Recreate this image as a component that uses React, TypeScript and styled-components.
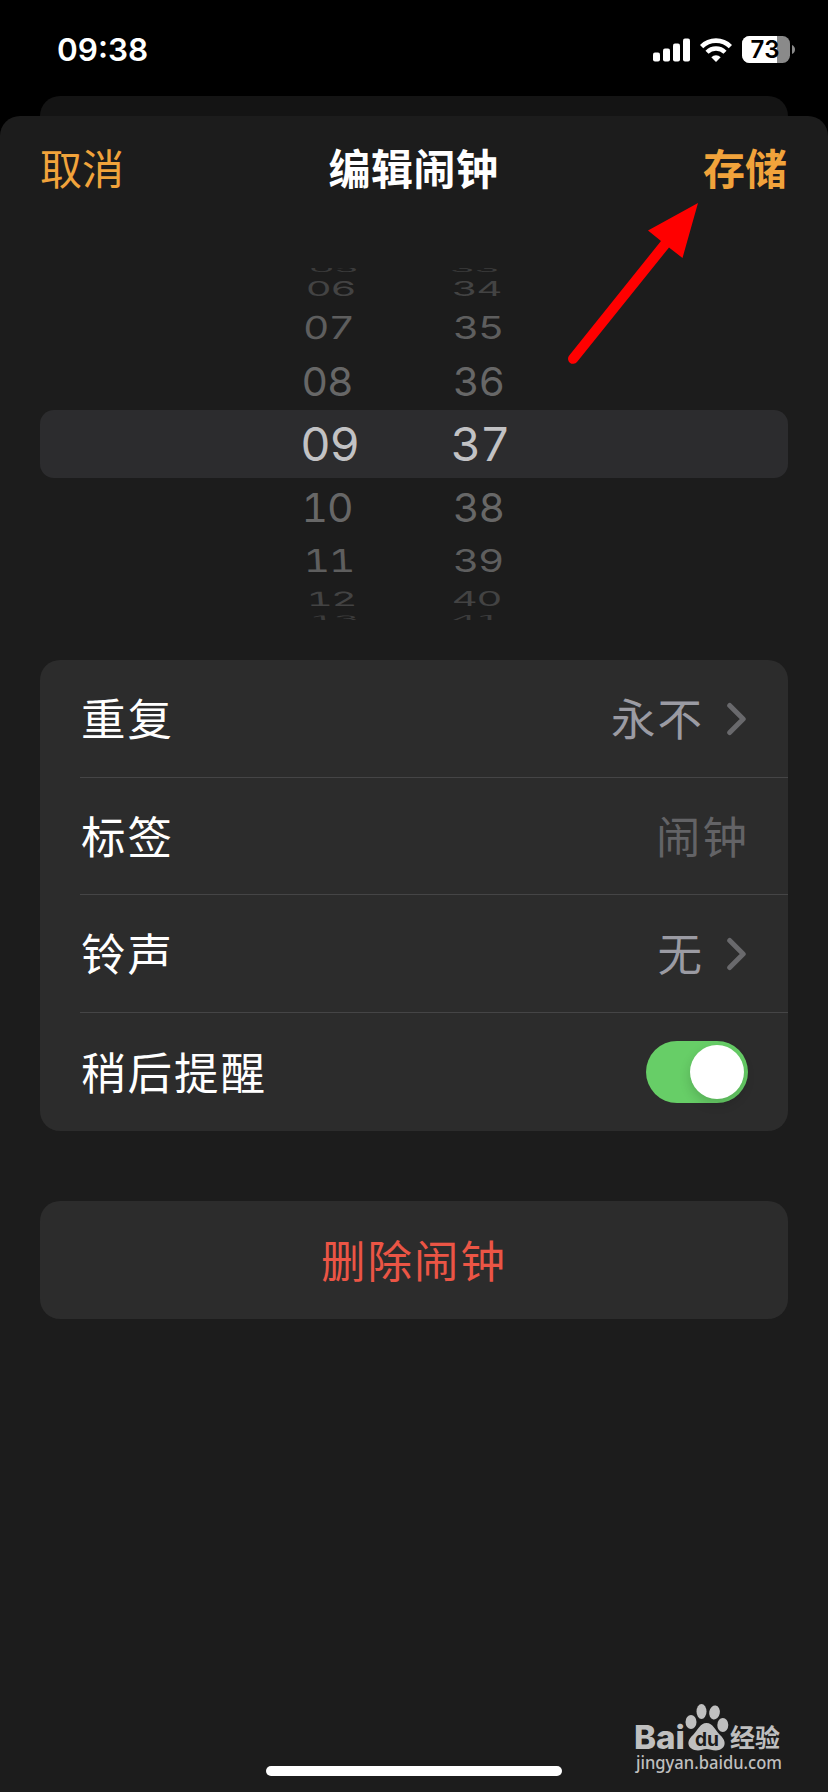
import React from "react";
import styled, { createGlobalStyle } from "styled-components";

const GlobalStyle = createGlobalStyle`
  * { box-sizing: border-box; }
  body { margin: 0; background: #000; font-family: Inter, "Noto Sans CJK SC", sans-serif; }
  button { border: 0; padding: 0; margin: 0; background: none; font: inherit; color: inherit; }
`;

const Screen = styled.div`
  position: relative;
  display: flex;
  flex-direction: column;
  width: 828px;
  height: 1792px;
  background: #000;
  color: #fff;
  overflow: hidden;
`;

const StatusBar = styled.header`
  display: flex;
  align-items: center;
  justify-content: space-between;
  height: 96px;
  padding: 3px 33px 0 57px;
`;

const Clock = styled.time`
  font-size: 31.5px;
  line-height: 40px;
  font-weight: 600;
`;

const StatusIcons = styled.div`
  display: flex;
  align-items: center;
  gap: 10px;
`;

const BackCard = styled.div`
  flex: none;
  height: 20px;
  margin: 0 40px;
  border-radius: 20px 20px 0 0;
  background: #141414;
`;

const Sheet = styled.main`
  flex: 1;
  display: flex;
  flex-direction: column;
  border-radius: 20px 20px 0 0;
  background: #1c1c1c;
`;

const NavBar = styled.nav`
  display: grid;
  grid-template-columns: 1fr auto 1fr;
  align-items: center;
  height: 102px;
  padding: 0 41px 0 40px;
  font-family: "Noto Sans CJK SC", sans-serif;
  font-size: 42px;
  line-height: 60px;
`;

const NavButton = styled.button<{ $strong?: boolean }>`
  justify-self: ${(p) => (p.$strong ? "end" : "start")};
  color: #f1a33b;
  font-weight: ${(p) => (p.$strong ? 700 : 400)};
`;

const Title = styled.h1`
  margin: 0;
  font-size: 42px;
  letter-spacing: 0.5px;
  font-weight: 700;
`;

const Picker = styled.section`
  display: grid;
  grid-template-rows: 8px 26px 51px 57px 68px 57px 51px 26px 8px;
  height: 352px;
  margin: 50px 40px 40px;
  overflow: hidden;
`;

const PickerRow = styled.div<{ $selected?: boolean }>`
  display: grid;
  grid-template-columns: 60px 60px;
  column-gap: 89px;
  justify-content: center;
  align-items: center;
  padding-right: 20px;
  border-radius: 14px;
  background: ${(p) => (p.$selected ? "#2c2c2e" : "transparent")};
`;

const Digits = styled.span<{ $size: number; $squash: number; $lean: number; $shift: number; $drop: number; $tone: string }>`
  display: block;
  justify-self: center;
  font-size: ${(p) => p.$size}px;
  line-height: 0;
  letter-spacing: -1.2px;
  font-variant-numeric: tabular-nums;
  color: ${(p) => p.$tone};
  transform: translate(${(p) => p.$shift}px, ${(p) => p.$drop}px) skewX(${(p) => p.$lean}deg) scaleY(${(p) => p.$squash});
`;

const Group = styled.section<{ $gap?: number }>`
  flex: none;
  margin: ${(p) => p.$gap ?? 0}px 40px 0;
  border-radius: 20px;
  background: #2c2c2c;
  overflow: hidden;
  font-family: "Noto Sans CJK SC", sans-serif;
  font-size: 44.5px;
  letter-spacing: 2px;
`;

const SettingRow = styled.div<{ $height: number }>`
  display: flex;
  align-items: center;
  height: ${(p) => p.$height}px;
  margin-left: 40px;
  padding-right: 40px;
  & + & { border-top: 1px solid #454546; }
`;

const Label = styled.span`
  flex: 1;
  line-height: 60px;
  padding: 0 0 3px 1px;
`;

const Value = styled.span<{ $placeholder?: boolean }>`
  line-height: 60px;
  padding-bottom: 3px;
  color: ${(p) => (p.$placeholder ? "#636366" : "#9b9ba3")};
  margin-right: ${(p) => (p.$placeholder ? -1 : 23)}px;
`;

const Switch = styled.button`
  display: flex;
  justify-content: flex-end;
  align-items: center;
  width: 102px;
  height: 62px;
  padding: 0 4px;
  border-radius: 31px;
  background: #67ce67;
`;

const Knob = styled.span`
  width: 54px;
  height: 54px;
  border-radius: 50%;
  background: #fff;
  box-shadow: 0 5px 12px rgba(0, 0, 0, 0.16);
`;

const DeleteButton = styled.button`
  display: block;
  width: 100%;
  height: 118px;
  padding-bottom: 3px;
  color: #eb5545;
  letter-spacing: 2px;
  line-height: 60px;
`;

const HomeIndicator = styled.div`
  width: 296px;
  height: 10px;
  margin: auto auto 16px;
  border-radius: 5px;
  background: #fff;
`;

const ArrowOverlay = styled.svg`
  position: absolute;
  left: 560px;
  top: 195px;
`;

const Watermark = styled.svg`
  position: absolute;
  left: 630px;
  top: 1695px;
`;

const SignalIcon = () => (
  <svg width="37" height="24" viewBox="0 0 37 24" fill="#fff">
    <rect x="0" y="14.5" width="7" height="9" rx="2" />
    <rect x="10" y="10.5" width="7" height="13" rx="2" />
    <rect x="20" y="5.5" width="7" height="18" rx="2" />
    <rect x="30" y="0.5" width="7" height="23" rx="2" />
  </svg>
);

const WifiIcon = () => (
  <svg width="32" height="24" viewBox="0 0 32 24" fill="none" stroke="#fff">
    <path d="M1.6 8.6 A20.4 20.4 0 0 1 30.4 8.6" strokeWidth="4.6" />
    <path d="M7 14.2 A12.8 12.8 0 0 1 25 14.2" strokeWidth="4.4" />
    <path d="M16 24 L11.3 19.2 A6.8 6.8 0 0 1 20.7 19.2 Z" fill="#fff" stroke="none" />
  </svg>
);

const BatteryIcon = () => (
  <svg width="53" height="27" viewBox="0 0 53 27">
    <defs>
      <clipPath id="battery-body"><rect width="48" height="27" rx="7.5" /></clipPath>
    </defs>
    <g clipPath="url(#battery-body)">
      <rect width="48" height="27" fill="#8a8a8a" />
      <rect width="35" height="27" fill="#fff" />
    </g>
    <path d="M50 9 Q53 10.5 53 13.5 Q53 16.5 50 18 Z" fill="#8a8a8a" />
    <text x="23" y="22" textAnchor="middle" fontFamily="Inter, sans-serif" fontWeight="600" fontSize="24" textLength="29" fill="#000">73</text>
  </svg>
);

const Chevron = () => (
  <svg width="21" height="34" viewBox="0 0 21 34" fill="none" stroke="#69696c" strokeWidth="5" strokeLinecap="round" strokeLinejoin="round">
    <path d="M2.7 3.5 L16.2 17 L2.7 30.5" />
  </svg>
);

interface WheelRow {
  hour: string;
  minute: string;
  size: number;
  squash: number;
  lean: number;
  hourShift: number;
  minuteShift: number;
  drop: number;
  tone: string;
}

const wheel: WheelRow[] = [
  { hour: "05", minute: "33", size: 40, squash: 0.22, lean: 0, hourShift: 4, minuteShift: -4, drop: -3, tone: "#3b3b3b" },
  { hour: "06", minute: "34", size: 40, squash: 0.49, lean: 0, hourShift: 1, minuteShift: -2, drop: 0, tone: "#434343" },
  { hour: "07", minute: "35", size: 40.5, squash: 0.78, lean: -3, hourShift: -1, minuteShift: -0.5, drop: 0, tone: "#5e5e5e" },
  { hour: "08", minute: "36", size: 41, squash: 0.97, lean: 0, hourShift: -2.5, minuteShift: 0, drop: -1, tone: "#676767" },
  { hour: "09", minute: "37", size: 47, squash: 1, lean: 0, hourShift: 0, minuteShift: 1.5, drop: 0, tone: "#c2c2c4" },
  { hour: "10", minute: "38", size: 41, squash: 0.97, lean: 0, hourShift: -2.5, minuteShift: 0, drop: 0, tone: "#676767" },
  { hour: "11", minute: "39", size: 40.5, squash: 0.78, lean: 3, hourShift: -0.5, minuteShift: -0.5, drop: 0, tone: "#5e5e5e" },
  { hour: "12", minute: "40", size: 40, squash: 0.49, lean: 5, hourShift: 1.5, minuteShift: -2, drop: 0, tone: "#434343" },
  { hour: "13", minute: "41", size: 40, squash: 0.22, lean: 8, hourShift: 4, minuteShift: -3, drop: 3, tone: "#3b3b3b" },
];

const TimePicker = () => (
  <Picker>
    {wheel.map(({ hour, minute, size, squash, lean, hourShift, minuteShift, drop, tone }) => (
      <PickerRow key={hour} $selected={hour === "09"}>
        <Digits $size={size} $squash={squash} $lean={lean} $shift={hourShift} $drop={drop} $tone={tone}>{hour}</Digits>
        <Digits $size={size} $squash={squash} $lean={0} $shift={minuteShift} $drop={drop} $tone={tone}>{minute}</Digits>
      </PickerRow>
    ))}
  </Picker>
);

export default function App() {
  return (
    <Screen>
      <GlobalStyle />
      <StatusBar>
        <Clock>09:38</Clock>
        <StatusIcons>
          <SignalIcon />
          <WifiIcon />
          <BatteryIcon />
        </StatusIcons>
      </StatusBar>
      <BackCard />
      <Sheet>
        <NavBar>
          <NavButton>取消</NavButton>
          <Title>编辑闹钟</Title>
          <NavButton $strong>存储</NavButton>
        </NavBar>
        <TimePicker />
        <Group>
          <SettingRow $height={117}>
            <Label>重复</Label>
            <Value>永不</Value>
            <Chevron />
          </SettingRow>
          <SettingRow $height={117}>
            <Label>标签</Label>
            <Value $placeholder>闹钟</Value>
          </SettingRow>
          <SettingRow $height={118}>
            <Label>铃声</Label>
            <Value>无</Value>
            <Chevron />
          </SettingRow>
          <SettingRow $height={119}>
            <Label>稍后提醒</Label>
            <Switch role="switch" aria-checked="true"><Knob /></Switch>
          </SettingRow>
        </Group>
        <Group $gap={70}>
          <DeleteButton>删除闹钟</DeleteButton>
        </Group>
        <HomeIndicator />
      </Sheet>
      <ArrowOverlay width="145" height="175" viewBox="560 195 145 175" fill="#f00">
        <path d="M698 203 L648 230.5 L661 241 L569.2 355.5 A5 5 0 0 0 577 362 L669 247.5 L682.5 258 Z" />
      </ArrowOverlay>
      <Watermark width="160" height="90" viewBox="630 1695 160 90" fill="#bfbfbf">
        <text x="634" y="1749" fontFamily="Inter, sans-serif" fontWeight="800" fontSize="32" textLength="51" lengthAdjust="spacingAndGlyphs">Bai</text>
        <ellipse cx="691" cy="1722" rx="5.5" ry="7" />
        <ellipse cx="701.5" cy="1711.5" rx="5" ry="7.5" />
        <ellipse cx="714.5" cy="1712.5" rx="5.3" ry="7" transform="rotate(10 714.5 1712.5)" />
        <ellipse cx="722.8" cy="1725" rx="5.5" ry="7" />
        <path d="M706.5 1723 C713 1723 715 1730 720 1735 C728 1742 725 1750 716 1750.5 C712 1750.5 710 1749 706.5 1749 C703 1749 701 1750.5 698 1750.5 C688 1750 685 1742 693 1735 C698 1730 700 1723 706.5 1723 Z" />
        <text x="695" y="1746" fontFamily="Inter, sans-serif" fontWeight="700" fontSize="19" textLength="24" lengthAdjust="spacingAndGlyphs" fill="#1c1c1c">du</text>
        <text x="730" y="1747" fontFamily="'Noto Sans CJK SC', sans-serif" fontWeight="700" fontSize="25" textLength="50">经验</text>
        <text x="636" y="1769.3" fontFamily="'Noto Sans', sans-serif" fontSize="18" fontWeight="500" textLength="146" lengthAdjust="spacingAndGlyphs">jingyan.baidu.com</text>
      </Watermark>
    </Screen>
  );
}
